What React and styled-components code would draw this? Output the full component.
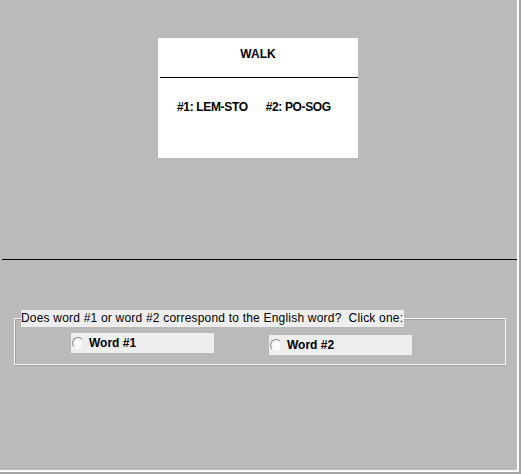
import React from 'react';
import styled, { createGlobalStyle } from 'styled-components';

const GlobalStyle = createGlobalStyle`
  html, body {
    margin: 0;
    padding: 0;
    background: #bababa;
  }
  body {
    font-family: "Liberation Sans", Arial, sans-serif;
    font-size: 12px;
    color: #000;
  }
`;

const Frame = styled('div')`
  box-sizing: border-box;
  width: 521px;
  height: 474px;
  background: #bababa;
  box-shadow:
    inset -1px -1px 0 #a4a4a4,
    inset -2px -2px 0 #a4a4a4,
    inset -4px -4px 0 #fdfdfd;
  display: flex;
  flex-direction: column;
`;

const Stage = styled('div')`
  height: 259px;
  box-sizing: border-box;
  padding: 38px 0 0 158px;
`;

const Card = styled('div')`
  width: 200px;
  height: 120px;
  background: #fff;
  display: flex;
  flex-direction: column;
`;

const Title = styled('div')`
  height: 32px;
  padding-top: 8px;
  box-sizing: border-box;
  text-align: center;
  font-weight: bold;
  font-size: 12px;
  line-height: 16px;
`;

const Rule = styled('div')`
  height: 1px;
  margin: 7px 0 0 2px;
  background: #000;
`;

const Pair = styled('div')`
  display: flex;
  gap: 18px;
  padding: 21px 0 0 19px;
  font-weight: bold;
  font-size: 12px;
  line-height: 16px;
  letter-spacing: -0.35px;
`;

const Divider = styled('div')`
  height: 1px;
  margin: 0 4px 0 2px;
  background: #000;
`;

const Lower = styled('div')`
  padding: 50px 15px 0 14px;
`;

const Group = styled('fieldset')`
  margin: 0;
  padding: 0 0 9px 0;
  border: 1px solid #f6f6f6;
  box-shadow: inset 1px 1px 0 #9e9e9e, 0 1px 0 #9e9e9e;
  min-height: 0;
`;

const Caption = styled('legend')`
  margin-left: 6px;
  padding: 0 1px 0 0;
  background: #eeeeee;
  font-size: 12px;
  line-height: 17px;
  letter-spacing: 0.2px;
  color: #000;
`;

const Choices = styled('div')`
  display: flex;
  gap: 55px;
  padding: 6px 0 0 56px;
`;

const Choice = styled('label')`
  width: 143px;
  height: 20px;
  margin-top: ${(p) => p.$drop}px;
  background: #eeeeee;
  display: flex;
  align-items: center;
  gap: 5px;
  padding-left: 1px;
  box-sizing: border-box;
  font-weight: bold;
  font-size: 12px;
`;

const Dot = styled('span')`
  width: 10px;
  height: 10px;
  border-radius: 50%;
  border: 1px solid;
  border-color: #8a8a8a #e8e8e8 #ffffff #8a8a8a;
  background: radial-gradient(circle at 60% 60%, #ffffff 0%, #f4f4f4 60%, #dcdcdc 100%);
  flex: none;
`;

const words = ['LEM-STO', 'PO-SOG'];

const App = () => (
  <>
    <GlobalStyle />
    <Frame>
      <Stage>
        <Card>
          <Title>WALK</Title>
          <Rule />
          <Pair>
            {words.map((w, i) => (
              <span key={w}>#{i + 1}: {w}</span>
            ))}
          </Pair>
        </Card>
      </Stage>
      <Divider />
      <Lower>
        <Group>
          <Caption>Does word #1 or word #2 correspond to the English word?&nbsp; Click one:</Caption>
          <Choices>
            <Choice $drop={0}>
              <Dot />
              Word #1
            </Choice>
            <Choice $drop={2}>
              <Dot />
              Word #2
            </Choice>
          </Choices>
        </Group>
      </Lower>
    </Frame>
  </>
);

export default App;
